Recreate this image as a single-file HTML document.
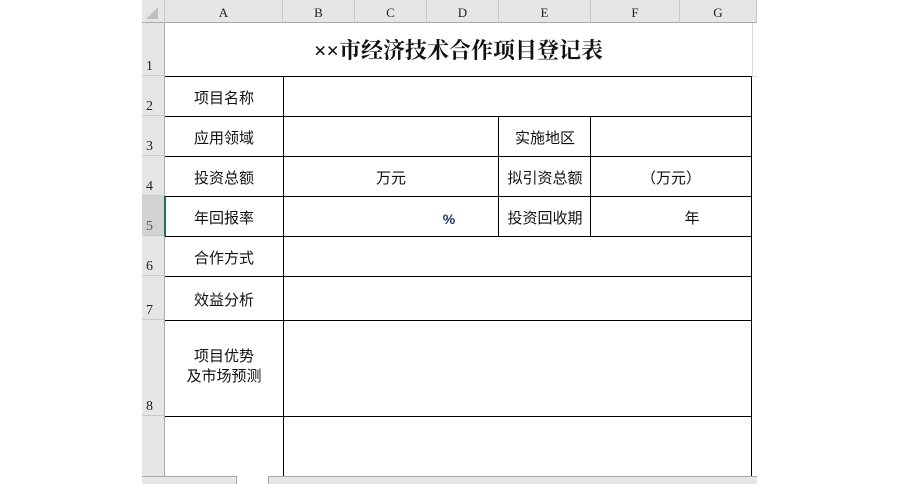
<!DOCTYPE html>
<html><head><meta charset="utf-8"><style>
body{margin:0;width:900px;height:484px;background:#fff;position:relative;overflow:hidden;font-family:"Liberation Sans","Noto Sans CJK SC",sans-serif;}
.a{position:absolute;}
.h{background:#e6e6e6;}
.ch{position:absolute;top:0;height:23px;line-height:26px;text-align:center;font-family:"Liberation Serif","Noto Serif CJK SC",serif;font-size:13px;color:#222;border-right:1px solid #c8c8c8;box-sizing:border-box;}
.rh{position:absolute;left:142px;width:23px;font-family:"Liberation Serif",serif;font-size:14px;color:#222;border-bottom:1px solid #c8c8c8;box-sizing:border-box;}
.rh span{position:absolute;left:4px;bottom:0px;}
.hl{position:absolute;height:1px;background:#000;}
.vl{position:absolute;width:1px;background:#000;}
.t{position:absolute;text-align:center;font-size:15px;color:#111;display:flex;align-items:center;justify-content:center;line-height:20px;padding-top:5px;box-sizing:border-box;}
</style></head><body>
<div class="a h" style="left:142px;top:0;width:615px;height:23px;border-bottom:1px solid #aaa;box-sizing:border-box"></div>
<div class="a" style="left:146px;top:7px;width:0;height:0;border-left:12px solid transparent;border-bottom:12px solid #c0c0c0"></div>
<div class="ch" style="left:142px;width:23px"></div>
<div class="ch" style="left:165px;width:118px">A</div>
<div class="ch" style="left:283px;width:72px">B</div>
<div class="ch" style="left:355px;width:72px">C</div>
<div class="ch" style="left:427px;width:72px">D</div>
<div class="ch" style="left:499px;width:92px">E</div>
<div class="ch" style="left:591px;width:89px">F</div>
<div class="ch" style="left:680px;width:77px">G</div>
<div class="a h" style="left:142px;top:23px;width:23px;height:453px;border-right:1px solid #aaa;box-sizing:border-box"></div>
<div class="rh" style="top:23px;height:53px"><span>1</span></div>
<div class="rh" style="top:76px;height:40px"><span>2</span></div>
<div class="rh" style="top:116px;height:40px"><span>3</span></div>
<div class="rh" style="top:156px;height:40px"><span>4</span></div>
<div class="rh" style="top:196px;height:40px;background:#d2d2d2;color:#217346"><span>5</span></div>
<div class="a" style="left:164px;top:196px;width:2px;height:40px;background:#217346"></div>
<div class="rh" style="top:236px;height:40px"><span>6</span></div>
<div class="rh" style="top:276px;height:44px"><span>7</span></div>
<div class="rh" style="top:320px;height:96px"><span>8</span></div>
<div class="a" style="left:752px;top:23px;width:1px;height:53px;background:#d8d8d8"></div>
<div class="a" style="left:752px;top:76px;width:5px;height:1px;background:#d8d8d8"></div>
<div class="t" style="left:165px;top:23px;width:587px;height:53px;font-family:'Liberation Serif','Noto Serif CJK SC',serif;font-weight:bold;font-size:22px;padding-top:2px;">××市经济技术合作项目登记表</div>
<div class="hl" style="left:165px;top:76px;width:587px"></div>
<div class="hl" style="left:165px;top:116px;width:587px"></div>
<div class="hl" style="left:165px;top:156px;width:587px"></div>
<div class="hl" style="left:165px;top:196px;width:587px"></div>
<div class="hl" style="left:165px;top:236px;width:587px"></div>
<div class="hl" style="left:165px;top:276px;width:587px"></div>
<div class="hl" style="left:165px;top:320px;width:587px"></div>
<div class="hl" style="left:165px;top:416px;width:587px"></div>
<div class="vl" style="left:283px;top:76px;height:400px"></div>
<div class="vl" style="left:751px;top:76px;height:400px"></div>
<div class="vl" style="left:498px;top:116px;height:120px"></div>
<div class="vl" style="left:590px;top:116px;height:120px"></div>
<div class="t" style="left:165px;top:76px;width:118px;height:40px">项目名称</div>
<div class="t" style="left:165px;top:116px;width:118px;height:40px">应用领域</div>
<div class="t" style="left:499px;top:116px;width:92px;height:40px">实施地区</div>
<div class="t" style="left:165px;top:156px;width:118px;height:40px">投资总额</div>
<div class="t" style="left:283px;top:156px;width:216px;height:40px">万元</div>
<div class="t" style="left:499px;top:156px;width:92px;height:40px">拟引资总额</div>
<div class="t" style="left:591px;top:156px;width:160px;height:40px">（万元）</div>
<div class="t" style="left:165px;top:196px;width:118px;height:40px">年回报率</div>
<div class="t" style="left:441px;top:196px;width:16px;height:40px;font-weight:bold;font-size:14px;color:#1a3a6a">%</div>
<div class="t" style="left:499px;top:196px;width:92px;height:40px">投资回收期</div>
<div class="t" style="left:591px;top:196px;width:202px;height:40px">年</div>
<div class="t" style="left:165px;top:236px;width:118px;height:40px">合作方式</div>
<div class="t" style="left:165px;top:276px;width:118px;height:44px">效益分析</div>
<div class="t" style="left:165px;top:320px;width:118px;height:96px;padding-top:0;padding-bottom:2px;">项目优势<br>及市场预测</div>
<div class="a" style="left:142px;top:476px;width:95px;height:8px;background:#e6e6e6;border-top:1px solid #aaa;border-right:1px solid #aaa;box-sizing:border-box"></div>
<div class="a" style="left:268px;top:476px;width:489px;height:8px;background:#e6e6e6;border-top:1px solid #aaa;border-left:1px solid #aaa;box-sizing:border-box"></div>
</body></html>
